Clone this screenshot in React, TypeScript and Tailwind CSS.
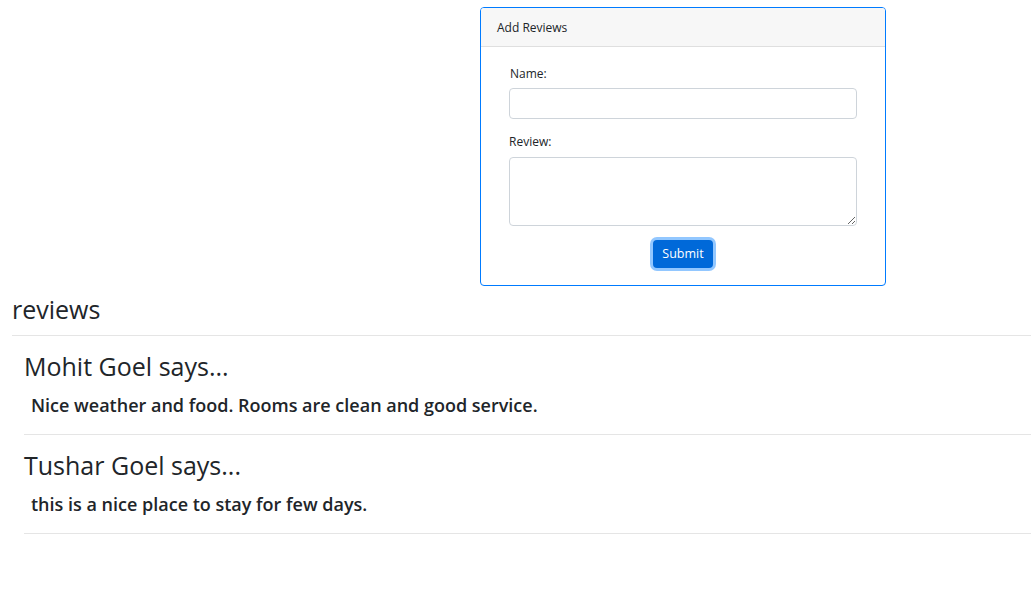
import React from "react"

const reviews = [
  { name: "Mohit Goel", text: "Nice weather and food. Rooms are clean and good service." },
  { name: "Tushar Goel", text: "this is a nice place to stay for few days." },
]

export default function App() {
  return (
    <div className="min-h-screen bg-white text-[#212529] font-['Open_Sans',sans-serif]">
      <div className="pt-[7px] pl-[480px]">
        <div className="w-[406px] rounded-[4px] border border-[#007bff] overflow-hidden">
          <div className="h-[39px] bg-[#f7f7f7] border-b border-[#dfdfdf] px-[16px] pt-[2px] flex items-center text-[12px]">
            Add Reviews
          </div>
          <div className="px-[28px] pt-[18px] pb-[17px] flex flex-col">
            <label className="block text-[12px] leading-[18px] mb-[5px] pl-[1px]">Name:</label>
            <input className="h-[31px] w-full rounded-[4px] border border-[#ced4da] outline-none" />
            <label className="block text-[12px] leading-[18px] mt-[14px] mb-[6px]">Review:</label>
            <textarea className="h-[69px] w-full rounded-[4px] border border-[#ced4da] outline-none" />
            <div className="flex justify-center mt-[14px]">
              <button className="h-[28px] w-[60px] pt-[1px] rounded-[4px] bg-[#0069d9] text-white text-[12.5px] shadow-[0_0_0_3px_rgba(38,143,255,0.5)]">
                Submit
              </button>
            </div>
          </div>
        </div>
      </div>
      <div className="pl-[12px]">
        <h2 className="text-[25px] leading-[31px] mt-[8px] pb-[10px] border-b border-[#e5e5e5]">reviews</h2>
        <div className="pl-[12px]">
          {reviews.map((r) => (
            <div key={r.name} className="pt-[15px] pb-[15px] border-b border-[#e5e5e5]">
              <h3 className="text-[25px] leading-[31px]">{r.name} says...</h3>
              <p className="mt-[10px] pl-[7px] text-[18px] leading-[27px] font-semibold">{r.text}</p>
            </div>
          ))}
        </div>
      </div>
    </div>
  )
}
